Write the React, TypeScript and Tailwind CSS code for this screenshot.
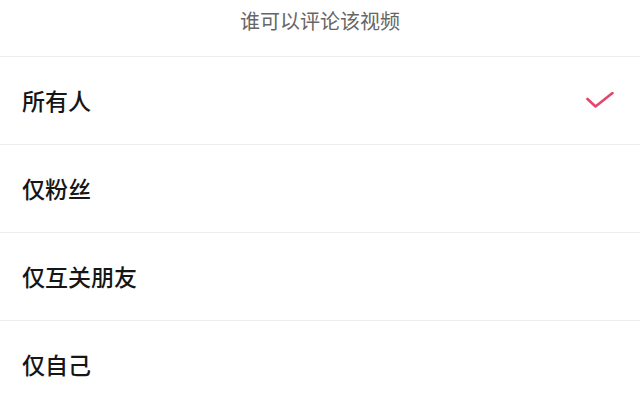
import React from "react";

const items = ["所有人", "仅粉丝", "仅互关朋友", "仅自己"];

export default function App() {
  return (
    <div
      className="w-[640px] h-[406px] bg-white overflow-hidden"
      style={{ fontFamily: '"Noto Sans CJK SC", "Noto Sans", sans-serif' }}
    >
      <div className="h-[57px] flex items-center justify-center border-b border-[#ededed]">
        <span className="text-[20px] text-[#666666] -mt-[14px] leading-none">谁可以评论该视频</span>
      </div>
      {items.map((t, i) => (
        <div
          key={t}
          className="h-[88px] flex items-center justify-between pl-[22px] pr-[26px] border-b border-[#ededed]"
        >
          <span className="text-[23px] font-medium text-[#161616] leading-none">{t}</span>
          {i === 0 && (
            <svg width="28" height="18" viewBox="0 0 28 18" fill="none">
              <path
                d="M1.5 7 L9.5 14.5 L26.5 1"
                stroke="#e5466b"
                strokeWidth="2.6"
                strokeLinecap="round"
                strokeLinejoin="round"
              />
            </svg>
          )}
        </div>
      ))}
    </div>
  );
}
